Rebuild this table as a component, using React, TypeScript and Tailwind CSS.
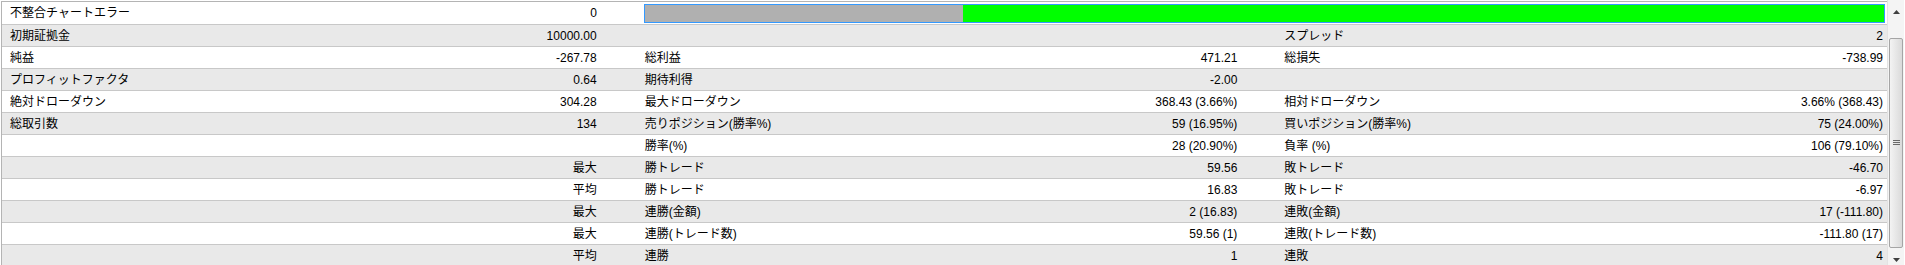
import React from "react";

type Row = [string, string, string, string, string, string];

const rows: Row[] = [
  ["初期証拠金", "10000.00", "", "", "スプレッド", "2"],
  ["純益", "-267.78", "総利益", "471.21", "総損失", "-738.99"],
  ["プロフィットファクタ", "0.64", "期待利得", "-2.00", "", ""],
  ["絶対ドローダウン", "304.28", "最大ドローダウン", "368.43 (3.66%)", "相対ドローダウン", "3.66% (368.43)"],
  ["総取引数", "134", "売りポジション(勝率%)", "59 (16.95%)", "買いポジション(勝率%)", "75 (24.00%)"],
  ["", "", "勝率(%)", "28 (20.90%)", "負率 (%)", "106 (79.10%)"],
  ["", "最大", "勝トレード", "59.56", "敗トレード", "-46.70"],
  ["", "平均", "勝トレード", "16.83", "敗トレード", "-6.97"],
  ["", "最大", "連勝(金額)", "2 (16.83)", "連敗(金額)", "17 (-111.80)"],
  ["", "最大", "連勝(トレード数)", "59.56 (1)", "連敗(トレード数)", "-111.80 (17)"],
  ["", "平均", "連勝", "1", "連敗", "4"],
];

function Cell({ label, value, w, pl, pr }: { label: string; value: string; w: string; pl: string; pr: string }) {
  return (
    <div className={`flex items-center justify-between ${w} ${pl} ${pr}`}>
      <span className="whitespace-nowrap">{label}</span>
      <span className="whitespace-nowrap">{value}</span>
    </div>
  );
}

export default function App() {
  return (
    <div
      className="flex h-[265px] w-[1905px] overflow-hidden bg-white text-[12px] text-black"
      style={{ fontFamily: '"Liberation Sans", "Noto Sans CJK JP", sans-serif' }}
    >
      <div className="ml-[1px] flex w-[1886px] flex-col border-l border-t border-[#b4b4b4] mt-[1px]">
        {/* Row 1 */}
        <div className="flex h-[23px] shrink-0 items-stretch border-b border-[#c8c8c8] bg-white leading-none">
          <Cell label="不整合チャートエラー" value="0" w="w-[639px]" pl="pl-[8px]" pr="pr-[44px]" />
          <div className="ml-[3px] mt-[2px] mb-[1px] flex w-[1241px] border border-[#3399ff] shadow-[inset_0_0_0_1px_#9fd0ff]">
            <div className="w-[318px] bg-[#b0b0b0]" />
            <div className="flex-1 bg-[#00ff00]" />
          </div>
        </div>
        {rows.map((r, i) => (
          <div
            key={i}
            className={`flex h-[22px] shrink-0 items-stretch border-b border-[#c8c8c8] leading-none ${
              i % 2 === 0 ? "bg-[#e9e9e9]" : "bg-white"
            }`}
          >
            <Cell label={r[0]} value={r[1]} w="w-[639px]" pl="pl-[8px]" pr="pr-[44px]" />
            <Cell label={r[2]} value={r[3]} w="w-[640px]" pl="pl-[4px]" pr="pr-[43px]" />
            <Cell label={r[4]} value={r[5]} w="w-[607px]" pl="pl-[4px]" pr="pr-[4px]" />
          </div>
        ))}
      </div>
      {/* Scrollbar */}
      <div className="flex w-[17px] flex-col border-l border-[#e3e3e3] bg-[#f4f4f4]">
        <div className="flex h-[22px] shrink-0 items-center justify-center pt-[2px]">
          <svg width="7" height="4" viewBox="0 0 7 4">
            <path d="M0 4 L3.5 0 L7 4 Z" fill="#404040" />
          </svg>
        </div>
        <div className="h-[16px] shrink-0" />
        <div className="mx-[1px] flex h-[210px] shrink-0 items-center justify-center rounded-[2px] border border-[#a5a5a5] bg-gradient-to-r from-[#f3f3f3] to-[#dadada]">
          <svg width="7" height="6" viewBox="0 0 7 6">
            <path d="M0 0.5 H7 M0 2.5 H7 M0 4.5 H7" stroke="#6a6a6a" strokeWidth="1" />
          </svg>
        </div>
        <div className="flex flex-1 items-end justify-center pb-[3px]">
          <svg width="7" height="4" viewBox="0 0 7 4">
            <path d="M0 0 L3.5 4 L7 0 Z" fill="#404040" />
          </svg>
        </div>
      </div>
    </div>
  );
}
